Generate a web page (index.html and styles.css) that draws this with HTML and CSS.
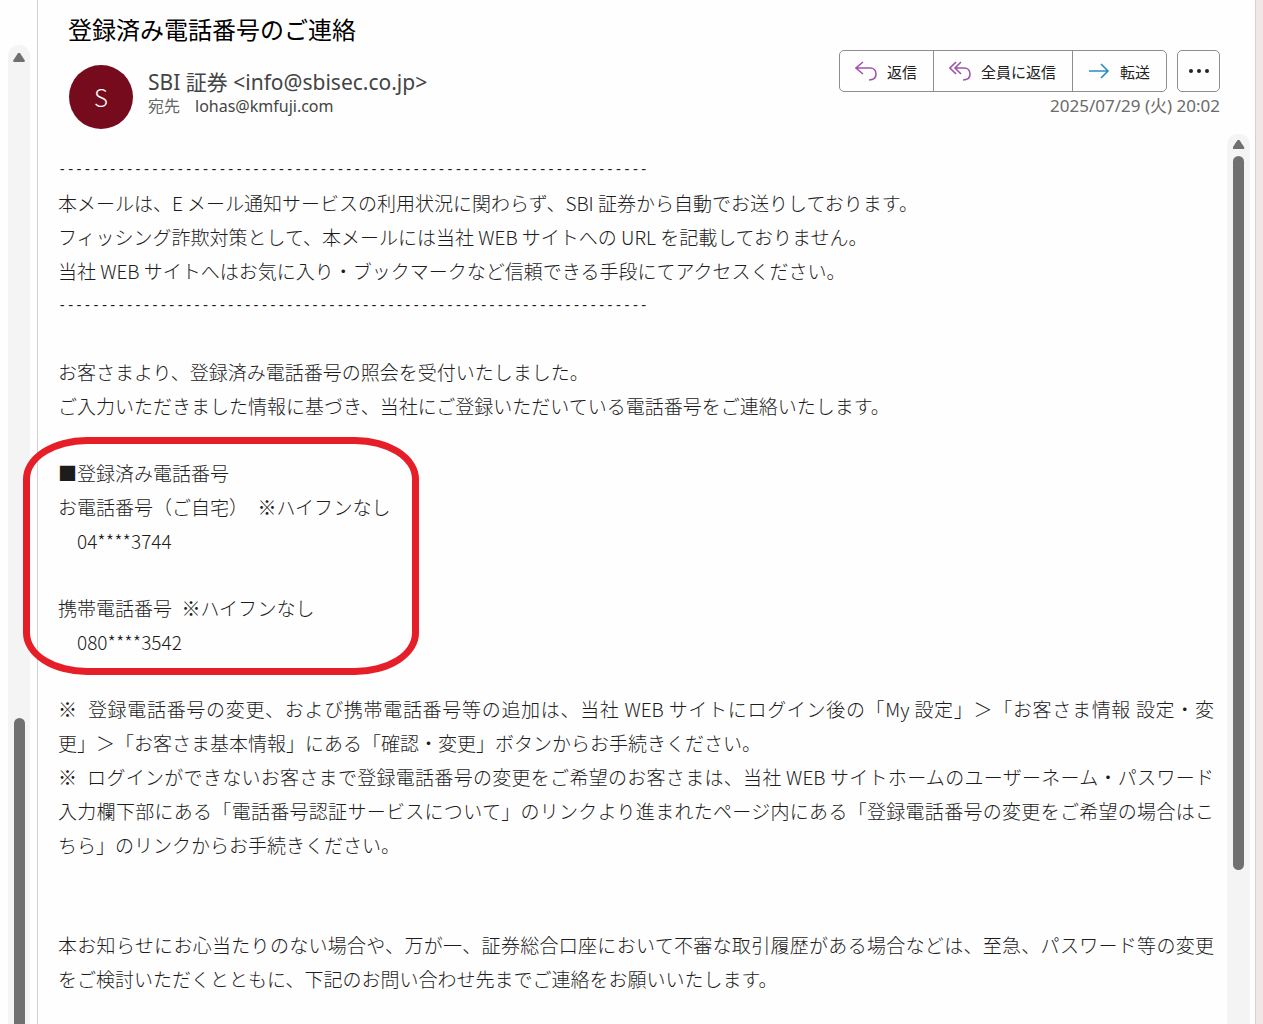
FILE: index.html
```html
<!DOCTYPE html>
<html lang="ja">

<head>
  <meta charset="UTF-8" />
  <meta name="viewport" content="width=device-width, initial-scale=1.0" />
  <title>登録済み電話番号のご連絡</title>
  <link rel="stylesheet" href="styles.css">
</head>

<body>
  <div class="window">
    <div class="scrollbar list-scroll">
      <span class="arrow"></span>
      <span class="thumb"></span>
    </div>
    <main class="mail">
      <h1 class="subject">登録済み電話番号のご連絡</h1>
      <header class="mail-header">
        <div class="avatar">S</div>
        <div class="people">
          <div class="from">SBI 証券 &lt;info@sbisec.co.jp&gt;</div>
          <div class="to"><span class="label">宛先</span><span>lohas@kmfuji.com</span></div>
        </div>
        <div class="tools">
          <div class="buttons">
            <div class="group">
              <button type="button">
                <svg class="reply" width="22" height="22" viewBox="0 0 22 22">
                  <path d="M8 2 L1 8 L8 14 M1 8 H15 C19 8 21 11 21 14 C21 18 18 20 14 20" />
                </svg>
                返信
              </button>
              <button type="button">
                <svg class="reply" width="22" height="22" viewBox="0 0 22 22">
                  <path d="M7 2 L1 8 L7 14 M12 2 L6 8 L12 14 M6 8 H15 C19 8 21 11 21 14 C21 18 18 20 14 20" />
                </svg>
                全員に返信
              </button>
              <button type="button">
                <svg class="forward" width="22" height="22" viewBox="0 0 22 22">
                  <path d="M1 11 H20 M13 4 L20 11 L13 18" />
                </svg>
                転送
              </button>
            </div>
            <button type="button" class="more" aria-label="その他">
              <svg width="22" height="6" viewBox="0 0 22 6">
                <circle cx="3" cy="3" r="2" />
                <circle cx="11" cy="3" r="2" />
                <circle cx="19" cy="3" r="2" />
              </svg>
            </button>
          </div>
          <time class="date" datetime="2025-07-29T20:02">2025/07/29 (火) 20:02</time>
        </div>
      </header>
      <div class="mail-body">
        <article class="message">
          <section>
            <p class="rule">----------------------------------------------------------------------</p>
            <p>本メールは、E メール通知サービスの利用状況に関わらず、SBI 証券から自動でお送りしております。</p>
            <p>フィッシング詐欺対策として、本メールには当社 WEB サイトへの URL を記載しておりません。</p>
            <p>当社 WEB サイトへはお気に入り・ブックマークなど信頼できる手段にてアクセスください。</p>
            <p class="rule">----------------------------------------------------------------------</p>
          </section>
          <section>
            <p>お客さまより、登録済み電話番号の照会を受付いたしました。</p>
            <p>ご入力いただきました情報に基づき、当社にご登録いただいている電話番号をご連絡いたします。</p>
          </section>
          <div class="phones">
            <section>
              <p>■登録済み電話番号</p>
              <p>お電話番号（ご自宅）&ensp;※ハイフンなし</p>
              <p>　04****3744</p>
            </section>
            <section>
              <p>携帯電話番号&ensp;※ハイフンなし</p>
              <p>　080****3542</p>
            </section>
          </div>
          <section>
            <p>※&ensp;登録電話番号の変更、および携帯電話番号等の追加は、当社 WEB サイトにログイン後の「My 設定」＞「お客さま情報 設定・変<span class="nobr">更」＞</span>「お客さま基本情報」にある「確認・変更」ボタンからお手続きください。</p>
            <p>※&ensp;ログインができないお客さまで登録電話番号の変更をご希望のお客さまは、当社 WEB サイトホームのユーザーネーム・パスワード<span class="nobr">入力</span>欄下部にある「電話番号認証サービスについて」のリンクより進まれたページ内にある「登録電話番号の変更をご希望の場合はこ<span class="nobr">ちら</span>」のリンクからお手続きください。</p>
          </section>
          <section class="notice">
            <p>本お知らせにお心当たりのない場合や、万が一、証券総合口座において不審な取引履歴がある場合などは、至急、パスワード等の変更をご検討いただくとともに、下記のお問い合わせ先までご連絡をお願いいたします。</p>
          </section>
        </article>
        <div class="scrollbar mail-scroll">
          <span class="arrow"></span>
          <span class="thumb"></span>
        </div>
      </div>
    </main>
    <div class="edge"></div>
  </div>
</body>

</html>
```
FILE: styles.css
```css
:root {
  --ink: #1c1c1c;
  --line: #8e8e8e;
  --track: #f4f4f4;
  --thumb: #707070;
  --mark: #e61e28;
  --jp: "Noto Sans CJK JP", sans-serif;
}

html,
body {
  margin: 0;
  padding: 0;
}

body {
  background-color: #fefefe;
  color: var(--ink);
  font-family: var(--jp);
}

.window {
  display: flex;
  height: 100vh;
  overflow: hidden;
}

/* scrollbars */
.scrollbar {
  display: flex;
  flex-direction: column;
  align-items: center;
  flex: none;
  box-sizing: border-box;
  width: 22px;
  padding-top: 8px;
  background-color: var(--track);
  border-radius: 11px 11px 0 0;
}

.arrow {
  width: 12px;
  height: 9px;
  background-color: var(--thumb);
  clip-path: polygon(42% 0, 58% 0, 100% 85%, 94% 100%, 6% 100%, 0 85%);
}

.thumb {
  width: 11px;
  background-color: var(--thumb);
  border-radius: 6px;
}

.list-scroll {
  margin: 45px 7px 0 8px;
}

.list-scroll .thumb {
  flex: 1;
  margin-top: calc(66vh - 20px);
  border-radius: 6px 6px 0 0;
}

.mail-scroll {
  width: 23px;
}

.mail-scroll .arrow {
  margin: -2px 0 7px;
}

.mail-scroll .thumb {
  height: 81%;
}

.edge {
  flex: none;
  width: 7px;
  background-color: #f0e8e6;
  border-left: 1px solid #d8d0ce;
}

/* reading pane */
.mail {
  flex: 1;
  display: flex;
  flex-direction: column;
  min-width: 0;
  border-left: 1px solid #d2d2d2;
}

.subject {
  margin: 11px 0 0 30px;
  font-size: 24px;
  font-weight: 400;
  line-height: 36px;
  color: #000;
}

.mail-header {
  display: flex;
  padding: 3px 35px 0 31px;
}

.avatar {
  width: 64px;
  height: 64px;
  margin-top: 15px;
  border-radius: 50%;
  background-color: #750b1c;
  color: #fff;
  font: 24px/64px var(--jp);
  font-weight: 300;
  text-align: center;
}

.people {
  margin: 19px 0 0 15px;
  font-family: "Noto Sans", "Noto Sans CJK JP", sans-serif;
  color: #444;
}

.from {
  font-size: 21px;
  line-height: 26px;
}

.to {
  font-size: 16px;
  line-height: 22px;
}

.label {
  margin-right: 15px;
  color: #666;
}

.tools {
  margin-left: auto;
  text-align: right;
}

.buttons {
  display: flex;
  gap: 10px;
}

.group {
  display: flex;
  border: 1px solid var(--line);
  border-radius: 5px;
}

button {
  display: flex;
  align-items: center;
  gap: 10px;
  height: 40px;
  padding: 0 16px 0 15px;
  border: 0;
  background: none;
  font: 15px var(--jp);
  color: #222;
}

.group button + button {
  border-left: 1px solid var(--line);
}

.more {
  box-sizing: border-box;
  width: 43px;
  height: 42px;
  padding: 0;
  justify-content: center;
  border: 1px solid var(--line);
  border-radius: 5px;
}

svg {
  fill: none;
  stroke-width: 1.6;
}

.reply {
  stroke: #a153ab;
}

.forward {
  stroke: #2a8dbd;
}

.more svg {
  fill: #222;
}

.date {
  display: block;
  font: 17px/28px "Noto Sans", "Noto Sans CJK JP", sans-serif;
  color: #6a6a6a;
}

.mail-body {
  flex: 1;
  display: flex;
  min-height: 0;
  padding-right: 5px;
  margin-top: 5px;
}

/* message text */
.message {
  flex: 1;
  padding: 18px 13px 0 20px;
  font-size: 19px;
  font-weight: 300;
  line-height: 34px;
  text-align: justify;
}

.message p {
  margin: 0;
}

.message section {
  margin-bottom: 33px;
}

.message .rule {
  font-family: "DejaVu Sans Mono", monospace;
  font-size: 14px;
}

.nobr {
  white-space: nowrap;
}

.message .notice {
  margin-top: 66px;
}

/* red frame round the phone numbers */
.phones {
  position: relative;
}

.phones::after {
  content: "";
  position: absolute;
  top: -19px;
  left: -35px;
  box-sizing: border-box;
  width: 396px;
  height: 238px;
  border: 7px solid var(--mark);
  border-radius: 64px / 42px;
}
```
